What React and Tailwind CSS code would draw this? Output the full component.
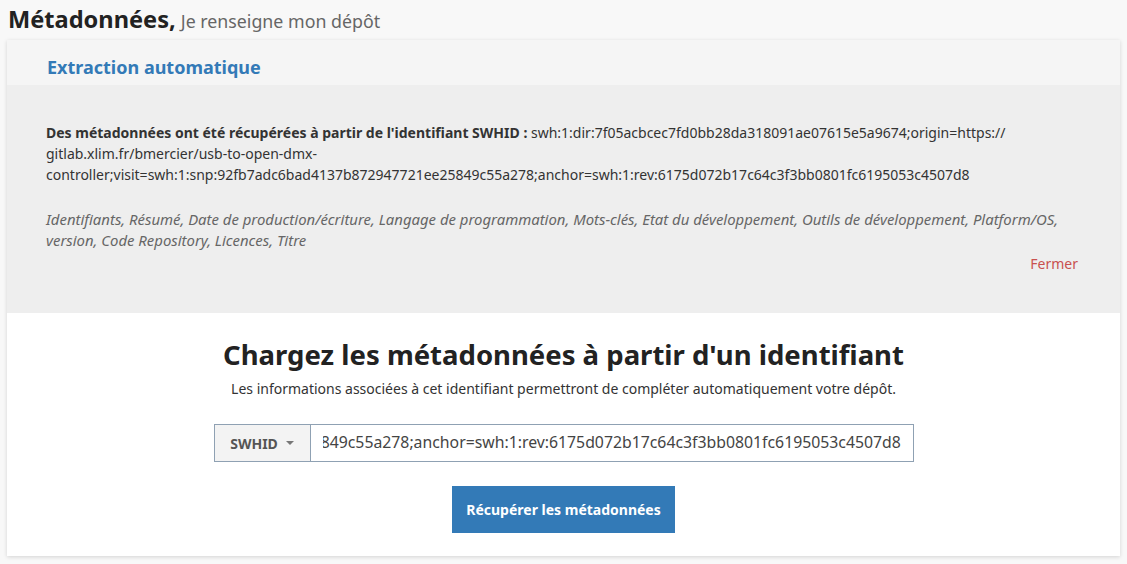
import React, { useEffect, useRef } from 'react';

const swhid =
  "swh:1:dir:7f05acbcec7fd0bb28da318091ae07615e5a9674;origin=https://gitlab.xlim.fr/bmercier/usb-to-open-dmx-controller;visit=swh:1:snp:92fb7adc6bad4137b872947721ee25849c55a278;anchor=swh:1:rev:6175d072b17c64c3f3bb0801fc6195053c4507d8";

const fields =
  "Identifiants, Résumé, Date de production/écriture, Langage de programmation, Mots-clés, Etat du développement, Outils de développement, Platform/OS, version, Code Repository, Licences, Titre";

function App() {
  const inputRef = useRef(null);

  // input shows the end of the identifier, as after typing/pasting
  useEffect(() => {
    if (inputRef.current) inputRef.current.scrollLeft = inputRef.current.scrollWidth;
  }, []);

  return (
    <div className="min-h-[564px] bg-[#f8f8f8] px-[7px] pt-[2px] text-[#333] font-['Noto_Sans',sans-serif]">
      {/* Page title */}
      <h1 className="flex items-baseline gap-[5px] h-[36px] pl-[1px]">
        <span className="text-[23.6px] font-bold text-[#222]">Métadonnées,</span>
        <span className="text-[17.8px] text-[#666]">Je renseigne mon dépôt</span>
      </h1>

      {/* Card */}
      <div className="mt-[2px] bg-white shadow-[0_1px_4px_rgba(0,0,0,0.15)]">
        <div className="bg-[#f5f5f5] h-[45px] flex items-center px-[40px] pt-[9px]">
          <h2 className="text-[18px] font-bold text-[#337ab7]">Extraction automatique</h2>
        </div>

        <div className="bg-[#eeeeee] pl-[39px] pr-[42px] pt-[37px] h-[228px] text-[14px]">
          <p className="leading-[21px]">
            <span className="font-bold">Des métadonnées ont été récupérées à partir de l'identifiant SWHID : </span>
            swh:1:dir:7f05acbcec7fd0bb28da318091ae07615e5a9674;origin=https://
            <br />
            gitlab.xlim.fr/bmercier/usb-to-open-dmx-
            <br />
            controller;visit=swh:1:snp:92fb7adc6bad4137b872947721ee25849c55a278;anchor=swh:1:rev:6175d072b17c64c3f3bb0801fc6195053c4507d8
          </p>
          <p className="mt-[24px] italic text-[14.9px] text-[#666] leading-[21px]">{fields}</p>
          <div className="flex justify-end mt-[2px]">
            <button className="text-[#c9514f] text-[14px] leading-[21px]">Fermer</button>
          </div>
        </div>

        {/* Load from identifier */}
        <div className="flex flex-col items-center pt-[24px] pb-[23px]">
          <h3 className="text-[27.5px] font-bold text-[#222] leading-[36px]">
            Chargez les métadonnées à partir d'un identifiant
          </h3>
          <p className="mt-[6px] text-[14px] text-[#333] leading-[20px]">
            Les informations associées à cet identifiant permettront de compléter automatiquement votre dépôt.
          </p>
          <div className="mt-[25px] flex h-[38px] w-[700px] border border-[#8fa1b3]">
            <button className="w-[96px] shrink-0 bg-[#f3f3f3] border-r border-[#8fa1b3] flex items-center justify-center gap-[8px] text-[14px] font-bold text-[#555]">
              SWHID
              <span className="w-0 h-0 border-l-[4px] border-r-[4px] border-t-[4px] border-l-transparent border-r-transparent border-t-[#777]" />
            </button>
            <input
              ref={inputRef}
              className="flex-1 min-w-0 px-[12px] text-[15.8px] text-[#444] bg-white outline-none"
              defaultValue={swhid}
            />
          </div>
          <button className="mt-[24px] h-[47px] px-[14px] bg-[#337ab7] text-white text-[14px] font-bold">
            Récupérer les métadonnées
          </button>
        </div>
      </div>
    </div>
  );
}

export default App;
